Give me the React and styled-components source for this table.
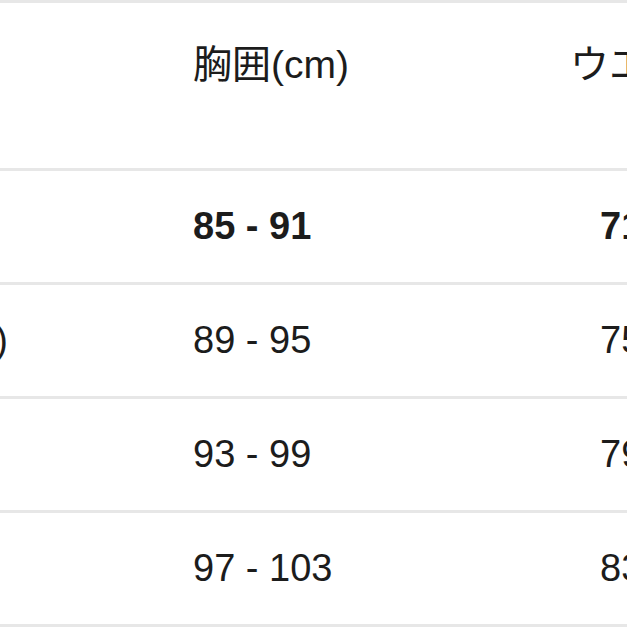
import styled, { createGlobalStyle } from "styled-components";

const GlobalStyle = createGlobalStyle`
  html, body {
    margin: 0;
    padding: 0;
    background: #ffffff;
    overflow: hidden;
  }
  body {
    font-family: "Liberation Sans", "Noto Sans CJK JP", sans-serif;
    color: #1c1c1c;
  }
`;

const Frame = styled.div`
  width: 627px;
  height: 627px;
  overflow: hidden;
`;

/* the table is wider than the view: its right part is anchored so that
   the second column starts at x = 169 and the first one runs off the left */
const Track = styled.div`
  width: 940px;
  display: flex;
  justify-content: flex-end;
`;

const Table = styled.table`
  flex-shrink: 0;
  border-collapse: collapse;
  border-top: 3px solid #e7e7e7;
`;

const Col = styled.col`
  width: ${(p) => (p.$w ? `${p.$w}px` : "auto")};
`;

const Row = styled.tr`
  border-bottom: 3px solid #e7e7e7;
`;

const HeadCell = styled.th`
  height: 126px;
  padding: 39px 0 0 24px;
  vertical-align: top;
  text-align: left;
  font-size: 39px;
  font-weight: 400;
  line-height: 1.2;
  white-space: nowrap;
`;

const Cell = styled.td`
  height: 111px;
  padding: 0 0 0 ${(p) => p.$indent || 24}px;
  vertical-align: middle;
  text-align: left;
  font-size: 38px;
  line-height: 1.2;
  font-weight: ${(p) => (p.$bold ? 700 : 400)};
  white-space: nowrap;
`;

const SizeHead = styled(HeadCell)`
  padding-right: 161px;
`;

const SizeCell = styled(Cell)`
  padding-right: 161px;
`;

const rows = [
  { size: "S", chest: "85 - 91", waist: "71 - 77", bold: true },
  { size: "M(ふつう)", chest: "89 - 95", waist: "75 - 81" },
  { size: "L", chest: "93 - 99", waist: "79 - 85" },
  { size: "XL", chest: "97 - 103", waist: "83 - 89" },
];

export default function App() {
  return (
    <Frame>
      <GlobalStyle />
      <Track>
        <Table>
          <colgroup>
            <Col />
            <Col $w={377} />
            <Col $w={394} />
          </colgroup>
          <thead>
            <Row>
              <SizeHead>サイズ</SizeHead>
              <HeadCell>胸囲(cm)</HeadCell>
              <HeadCell>ウエスト(cm)</HeadCell>
            </Row>
          </thead>
          <tbody>
            {rows.map((r) => (
              <Row key={r.size}>
                <SizeCell $bold={r.bold}>{r.size}</SizeCell>
                <Cell $bold={r.bold}>{r.chest}</Cell>
                <Cell $bold={r.bold} $indent={54}>
                  {r.waist}
                </Cell>
              </Row>
            ))}
          </tbody>
        </Table>
      </Track>
    </Frame>
  );
}
